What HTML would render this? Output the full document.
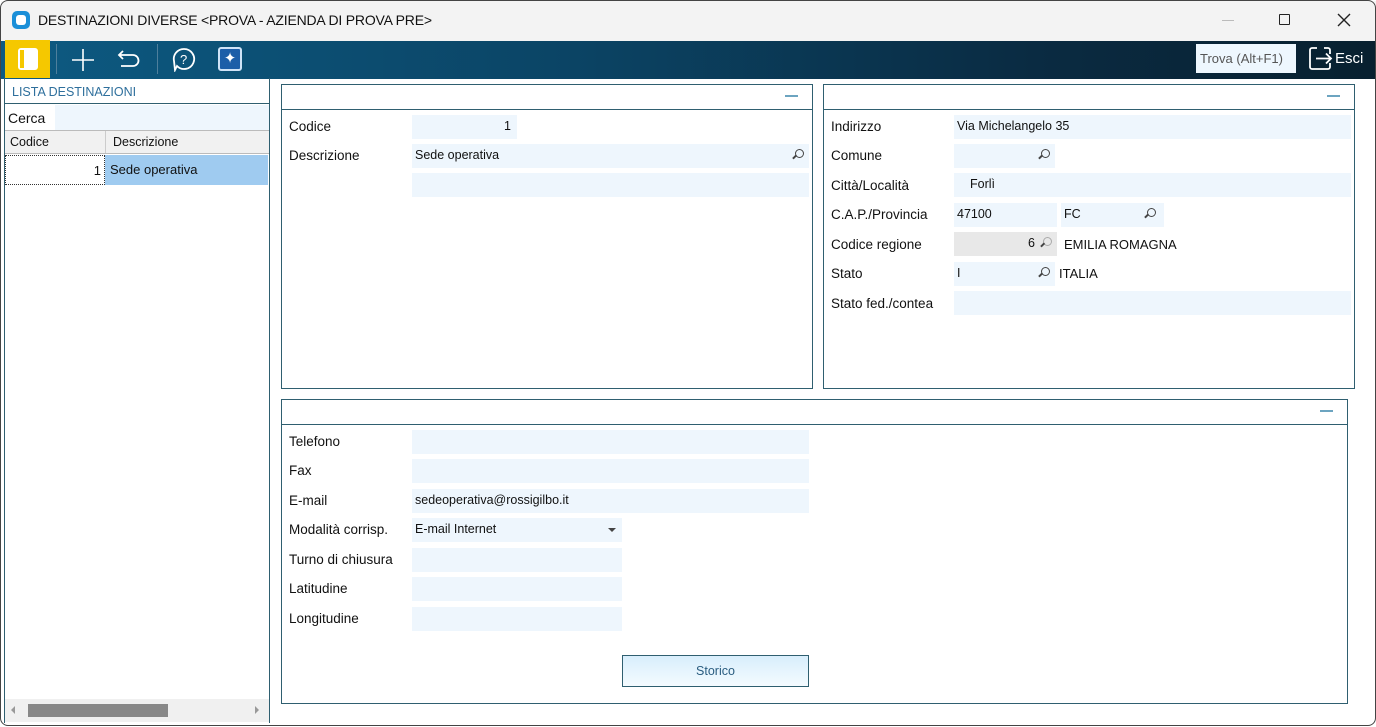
<!DOCTYPE html>
<html><head><meta charset="utf-8"><style>
*{box-sizing:border-box;margin:0;padding:0}
body{width:1376px;height:726px;overflow:hidden;background:#fff;font-family:"Liberation Sans","DejaVu Sans",sans-serif;font-size:13px;color:#111;position:relative}
.a{position:absolute}
.win{left:1px;top:1px;width:1376px;height:726px;overflow:hidden}
.frame{left:0;top:0;width:1376px;height:726px;border:1px solid #444;border-radius:8px;z-index:9}
.title{left:-1px;top:-1px;width:1378px;height:41px;background:#f3f3f3}
.tb{left:-1px;top:40px;width:1378px;height:38px;background:linear-gradient(90deg,#0d5a82,#0b4566 40%,#0a2b42 75%,#08202f)}
.in{background:#eef6fd;height:24px;padding:4px 3px;font-size:12.5px}
.lbl{font-size:13.5px}
.panel{border:1px solid #2f5f70;background:#fff}
.ph{border-bottom:1px solid #2f5f70;height:25px;position:relative}
.ph:after{content:"";position:absolute;right:14px;top:10px;width:13px;height:2px;background:#6ca4c0}
.mag{position:absolute;right:5px;top:5px;width:9px;height:9px;border:1.5px solid #444;border-radius:50%}
.mag:after{content:"";position:absolute;left:-4px;top:6px;width:5px;height:1.5px;background:#444;transform:rotate(-45deg)}
</style></head><body>
<div class="a win">
<div class="a title"></div>
<div class="a" style="left:11px;top:10px;width:18px;height:18px;border-radius:5px;background:#1a8fd8"><div class="a" style="left:4px;top:4px;width:10px;height:10px;border-radius:3px;background:#fff"></div></div>
<div class="a" style="left:37px;top:11px;font-size:14px;letter-spacing:-0.2px">DESTINAZIONI DIVERSE &lt;PROVA - AZIENDA DI PROVA PRE&gt;</div>
<div class="a" style="left:1221px;top:19px;width:12px;height:1px;background:#bbb"></div>
<div class="a" style="left:1278px;top:13px;width:11px;height:11px;border:1.3px solid #222;border-radius:1px"></div>
<svg class="a" style="left:1336px;top:12px" width="14" height="14"><path d="M1 1 L13 13 M13 1 L1 13" stroke="#222" stroke-width="1.4"/></svg>
<div class="a tb"></div>
<div class="a" style="left:4px;top:39px;width:45px;height:38px;background:#f5c800"></div>
<div class="a" style="left:17px;top:47px;width:20px;height:22px;border-radius:3px;background:#fff;border:2px solid #fff"><div class="a" style="left:0;top:0;width:5px;height:18px;background:#f5c800;border-right:1px solid #fff"></div></div>
<div class="a" style="left:55px;top:43px;width:1px;height:30px;background:#4e7f9c"></div>
<svg class="a" style="left:70px;top:47px" width="24" height="24"><path d="M12 1 V23 M1 12 H23" stroke="#fff" stroke-width="1.6"/></svg>
<svg class="a" style="left:115px;top:46px" width="26" height="24"><path d="M7 4 L3 8 L7 12 M3 8 H17 A5.5 5.5 0 0 1 17 19 H5" fill="none" stroke="#fff" stroke-width="1.8"/></svg>
<div class="a" style="left:156px;top:43px;width:1px;height:30px;background:#4e7f9c"></div>
<svg class="a" style="left:171px;top:46px" width="26" height="25"><path d="M12 2 A10 10 0 1 1 5 19 L3 23 L2 14 A10 10 0 0 1 12 2Z" fill="none" stroke="#fff" stroke-width="1.8"/><text x="8" y="17" fill="#fff" font-size="13" font-family="Liberation Sans">?</text></svg>
<div class="a" style="left:217px;top:46px;width:24px;height:24px;background:#1c5ea8;border:2px solid #cfe3f7;border-radius:3px;color:#fff;font-size:15px;text-align:center;line-height:20px">✦</div>
<div class="a" style="left:1195px;top:43px;width:100px;height:29px;background:#eef7fe;color:#555;font-size:13px;padding:7px 4px">Trova (Alt+F1)</div>
<svg class="a" style="left:1307px;top:45px" width="26" height="26"><path d="M9 2 H4 A2 2 0 0 0 2 4 V21 A2 2 0 0 0 4 23 H20 A2 2 0 0 0 22 21 V17 M22 8 V4 A2 2 0 0 0 20 2 H16 M8 12.5 H23 M18 7.5 L23 12.5 L18 17.5" fill="none" stroke="#fff" stroke-width="1.8"/></svg>
<div class="a" style="left:1334px;top:49px;color:#fff;font-size:15px">Esci</div>

<div class="a" style="left:3px;top:77px;width:266px;height:645px;border-right:1px solid #2f5f70;border-left:1px solid #2f5f70"></div>
<div class="a" style="left:4px;top:78px;width:264px;height:25px;border-bottom:1px solid #2f5f70;color:#2e6f9c;font-size:12.5px;padding:6px 7px">LISTA DESTINAZIONI</div>
<div class="a" style="left:4px;top:104px;width:264px;height:25px;background:#eef6fd"><div class="a" style="left:0;top:0;width:50px;height:25px;background:#fff;padding:5px 3px;font-size:14px">Cerca</div></div>
<div class="a" style="left:4px;top:129px;width:264px;height:24px;background:#f1f1f1;border-top:1px solid #bbb;border-bottom:1px solid #bbb;font-size:12.5px"><span class="a" style="left:5px;top:4px">Codice</span><span class="a" style="left:100px;top:0;height:22px;border-left:1px solid #ccc;padding:4px 7px">Descrizione</span></div>
<div class="a" style="left:4px;top:154px;width:100px;height:30px;border:1px dotted #333;text-align:right;padding:7px 3px">1</div>
<div class="a" style="left:104px;top:154px;width:163px;height:30px;background:#9fcbf0;padding:7px 5px">Sede operativa</div>
<div class="a" style="left:4px;top:698px;width:264px;height:23px;background:#f0f0f0"></div>
<div class="a" style="left:27px;top:703px;width:140px;height:13px;background:#888"></div>
<div class="a" style="left:10px;top:705px;width:0;height:0;border:4px solid transparent;border-right-color:#999;border-left:0"></div>
<div class="a" style="left:254px;top:705px;width:0;height:0;border:4px solid transparent;border-left-color:#999;border-right:0"></div>

<div class="a panel" style="left:280px;top:83px;width:532px;height:305px"><div class="ph"></div></div>
<div class="a lbl" style="left:288px;top:118px">Codice</div>
<div class="a in" style="left:411px;top:114px;width:105px;text-align:right;padding-right:6px">1</div>
<div class="a lbl" style="left:288px;top:147px">Descrizione</div>
<div class="a in" style="left:411px;top:143px;width:397px">Sede operativa<span class="mag"></span></div>
<div class="a in" style="left:411px;top:172px;width:397px"></div>

<div class="a panel" style="left:822px;top:83px;width:532px;height:305px"><div class="ph"></div></div>
<div class="a lbl" style="left:830px;top:118px">Indirizzo</div>
<div class="a in" style="left:953px;top:114px;width:397px">Via Michelangelo 35</div>
<div class="a lbl" style="left:830px;top:147px">Comune</div>
<div class="a in" style="left:953px;top:143px;width:101px"><span class="mag"></span></div>
<div class="a lbl" style="left:830px;top:177px">Città/Località</div>
<div class="a in" style="left:953px;top:172px;width:397px;padding-left:16px">Forlì</div>
<div class="a lbl" style="left:830px;top:206px">C.A.P./Provincia</div>
<div class="a in" style="left:953px;top:202px;width:103px">47100</div>
<div class="a in" style="left:1060px;top:202px;width:103px">FC<span class="mag" style="right:8px"></span></div>
<div class="a lbl" style="left:830px;top:236px">Codice regione</div>
<div class="a in" style="left:953px;top:231px;width:103px;background:#e8e8e8;text-align:right;padding-right:22px">6<span class="mag" style="border-color:#aaa"></span></div>
<div class="a" style="left:1063px;top:236px;font-size:13px">EMILIA ROMAGNA</div>
<div class="a lbl" style="left:830px;top:265px">Stato</div>
<div class="a in" style="left:953px;top:261px;width:101px">I<span class="mag"></span></div>
<div class="a" style="left:1058px;top:265px">ITALIA</div>
<div class="a lbl" style="left:830px;top:295px">Stato fed./contea</div>
<div class="a in" style="left:953px;top:290px;width:397px"></div>

<div class="a panel" style="left:280px;top:398px;width:1067px;height:305px"><div class="ph"></div></div>
<div class="a lbl" style="left:288px;top:433px">Telefono</div>
<div class="a in" style="left:411px;top:429px;width:397px"></div>
<div class="a lbl" style="left:288px;top:462px">Fax</div>
<div class="a in" style="left:411px;top:458px;width:397px"></div>
<div class="a lbl" style="left:288px;top:492px">E-mail</div>
<div class="a in" style="left:411px;top:488px;width:397px">sedeoperativa@rossigilbo.it</div>
<div class="a lbl" style="left:288px;top:521px">Modalità corrisp.</div>
<div class="a in" style="left:411px;top:517px;width:210px">E-mail Internet<span class="a" style="right:6px;top:10px;border:4px solid transparent;border-top-color:#444;border-bottom:0"></span></div>
<div class="a lbl" style="left:288px;top:551px">Turno di chiusura</div>
<div class="a in" style="left:411px;top:547px;width:210px"></div>
<div class="a lbl" style="left:288px;top:580px">Latitudine</div>
<div class="a in" style="left:411px;top:576px;width:210px"></div>
<div class="a lbl" style="left:288px;top:610px">Longitudine</div>
<div class="a in" style="left:411px;top:606px;width:210px"></div>
<div class="a" style="left:621px;top:654px;width:187px;height:32px;border:1px solid #2f5f70;background:linear-gradient(#d8eefc,#f4fbff);color:#2a5d80;text-align:center;line-height:30px;font-size:12.5px">Storico</div>
</div>
<div class="a frame"></div>
</body></html>
